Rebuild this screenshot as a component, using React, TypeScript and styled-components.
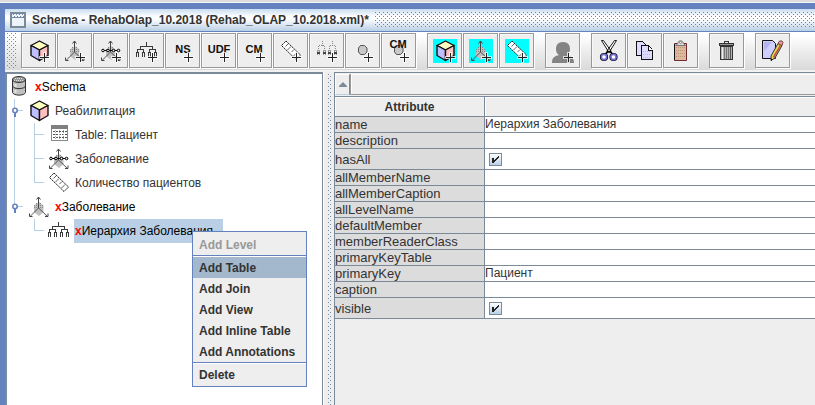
import React from "react";
import styled, { createGlobalStyle } from "styled-components";

const BLUE = "#6382bf";
const STEEL = "#7a8a99";
const PALE = "#b8cfe5";

const Global = createGlobalStyle`
  *, *::before, *::after { box-sizing: border-box; }
  body {
    margin: 0;
    background: #eeeeee;
    color: #333333;
    font: 12px/16px "Liberation Sans", Arial, sans-serif;
    overflow: hidden;
  }
  button, input { font: inherit; color: inherit; margin: 0; padding: 0; }
`;

const Desktop = styled.div`
  display: flex;
  flex-direction: column;
  height: 100vh;
  padding-top: 3px;
  background: linear-gradient(#dddddd 0 2px, #f4f4f4 2px 3px, #eeeeee 3px);
`;

const Frame = styled.section`
  flex: 1;
  min-height: 0;
  display: flex;
  flex-direction: column;
  border-top: 6px solid ${BLUE};
  border-left: 5px solid ${BLUE};
`;

const TitleBar = styled.header`
  display: flex;
  align-items: center;
  gap: 6px;
  height: 23px;
  padding-left: 5px;
  border-bottom: 1px solid ${BLUE};
  background: linear-gradient(#c8ddf2, #ffffff 35%, #ffffff 45%, ${PALE});
`;

const Title = styled.h1`
  margin: 0;
  font-size: 12px;
  line-height: 16px;
  font-weight: bold;
  white-space: nowrap;
`;

const DotFill = styled.svg`
  flex: 1;
  min-width: 0;
  height: 16px;
`;

const ToolBar = styled.div`
  display: flex;
  gap: 11px;
  height: 40px;
  padding: 1px 0 0 2px;
  background: linear-gradient(#ffffff 10%, #eeeeee 45%, #dadada 94%, #f2f2f2 95%);
`;

const Grip = styled.svg`
  width: 10px;
  height: 36px;
  margin-right: -7px;
  flex: none;
`;

const ToolGroup = styled.div`
  display: flex;
  gap: 1px;
`;

const ToolButton = styled.button`
  display: flex;
  flex: none;
  width: 35px;
  height: 35px;
  padding: 5px 4px 4px 5px;
  border: 1px solid #999999;
  border-radius: 0;
  background: #eeeeee;
  box-shadow: 1px 1px 0 #ffffff, inset 1px 1px 0 #f8f8f8;
`;

const Icon = styled.svg<{ $bg?: string }>`
  display: block;
  flex: none;
  width: 24px;
  height: 24px;
  background: ${(p) => p.$bg ?? "transparent"};
`;

const Body = styled.main`
  flex: 1;
  min-height: 0;
  display: grid;
  grid-template-columns: 318px 11px minmax(0, 1fr);
`;

const TreePane = styled.div`
  position: relative;
  border: solid ${STEEL};
  border-width: 2px 1px 0 2px;
  background: #ffffff;
  padding-top: 1px;
`;

const TreeList = styled.ul`
  margin: 0;
  padding: 0;
  list-style: none;
`;

const TreeRow = styled.li`
  display: flex;
  align-items: center;
  height: 24px;
`;

const Guide = styled.svg`
  flex: none;
  width: 20px;
  height: 24px;
`;

const NodeLabel = styled.span<{ $marked?: boolean; $selected?: boolean }>`
  display: flex;
  align-items: center;
  align-self: stretch;
  margin-left: 3px;
  padding: 0 10px 0 1px;
  white-space: nowrap;
  color: ${(p) => (p.$marked ? "#000000" : "#333333")};
  background: ${(p) => (p.$selected ? PALE : "transparent")};
`;

const Mark = styled.b`
  color: #ff0000;
`;

const Menu = styled.div`
  position: absolute;
  left: 185px;
  top: 157px;
  z-index: 2;
  display: flex;
  flex-direction: column;
  width: 115px;
  padding: 2px 0 1px;
  border: 1px solid ${BLUE};
  background: #eeeeee;
`;

const MenuItem = styled.button<{ $active?: boolean }>`
  height: 21px;
  padding: 0 6px;
  border: 0;
  text-align: left;
  font-weight: bold;
  line-height: 20px;
  white-space: nowrap;
  background: ${(p) => (p.$active ? "#a3b8cc" : "transparent")};
  &:disabled { color: #999999; }
`;

const MenuRule = styled.hr`
  width: 100%;
  height: 2px;
  margin: 0;
  border: 0;
  border-top: 1px solid ${BLUE};
  background: #ffffff;
`;

const Divider = styled.svg`
  width: 11px;
  height: 100%;
  border-left: 1px solid #ffffff;
  background: #eeeeee;
`;

const Properties = styled.div`
  min-width: 0;
  border-top: 1px solid ${STEEL};
  border-left: 1px solid ${STEEL};
`;

const CollapseBar = styled.div`
  display: flex;
  height: 24px;
  padding: 1px 0;
  border-bottom: 1px solid ${STEEL};
`;

const ArrowButton = styled.button`
  display: grid;
  place-items: center;
  width: 15px;
  border: 1px solid #ffffff;
  border-right-color: ${STEEL};
  border-bottom-color: ${PALE};
  background: #eeeeee;
`;

const Track = styled.div`
  flex: 1;
  border: solid #999999;
  border-width: 0 0 1px 1px;
  box-shadow: inset 1px 1px 0 #ffffff;
`;

const Grid = styled.table`
  width: 100%;
  table-layout: fixed;
  border-collapse: separate;
  border-spacing: 0;
  line-height: 15px;
  white-space: nowrap;
`;

const HeadCell = styled.th<{ $first?: boolean }>`
  height: 20px;
  padding: 2px 0 0;
  width: ${(p) => (p.$first ? "150px" : "auto")};
  border: solid ${STEEL};
  border-width: 0 ${(p) => (p.$first ? "1px" : "0")} 1px 0;
  box-shadow: inset 1px 1px 0 #ffffff;
`;

const NameCell = styled.th<{ $tall?: boolean }>`
  height: ${(p) => (p.$tall ? "21px" : "16px")};
  padding: 0;
  text-align: left;
  font-size: 13px;
  font-weight: normal;
  border: solid ${STEEL};
  border-width: 0 1px 1px 0;
  background: #dcdcdc;
`;

const ValueCell = styled.td`
  padding: 0;
  border-bottom: 1px solid ${STEEL};
  background: #ffffff;
`;

const ValueInput = styled.input`
  display: block;
  width: 100%;
  height: 15px;
  border: 0;
  outline: 0;
  background: transparent;
`;

const Check = styled.input`
  display: block;
  appearance: none;
  width: 13px;
  height: 13px;
  margin-left: 4px;
  border: 1px solid ${STEEL};
  background: linear-gradient(#ffffff, ${PALE});
  &:checked {
    background: url("data:image/svg+xml,%3Csvg xmlns='http://www.w3.org/2000/svg' viewBox='0 0 11 11'%3E%3Cpath d='M2 4h2v2h1v-1h1v-1h1v-1h1v-1h1v2h-1v1h-1v1h-1v1h-1v1h-1v1h-2z' fill='%23222'/%3E%3C/svg%3E"),
      linear-gradient(#ffffff, ${PALE});
  }
`;

const DotPattern = ({ id, color }: { id: string; color: string }) => (
  <>
    <defs>
      <pattern id={id} width="4" height="4" patternUnits="userSpaceOnUse">
        <path d="M0 0h1v1H0zM2 2h1v1H2z" fill={color} />
      </pattern>
    </defs>
    <rect width="100%" height="100%" fill={`url(#${id})`} />
  </>
);

const Plus = () => (
  <g shapeRendering="crispEdges">
    <path d="M16 13h3v4h4v3h-4v4h-3v-4h-4v-3h4z" fill="#fff" opacity=".7" />
    <path d="M17 14h1v4h4v1h-4v4h-1v-4h-4v-1h4z" fill="#222" />
  </g>
);

const Cube = () => (
  <g stroke="#111" strokeWidth="1.4" strokeLinejoin="round">
    <path d="M12.5 2 21 6.5 12.5 11 4 6.5z" fill="#ffffbf" />
    <path d="M4 6.5 12.5 11v10.5L4 16.5z" fill="#bfbfff" />
    <path d="M21 6.5 12.5 11v10.5l8.5-5z" fill="#ffbfbf" />
  </g>
);

const Axes = () => (
  <g fill="none" stroke="#444">
    <path d="M12 7 16.5 10.5V17L12 21l-5-4v-6.5z" fill="#c0c0c0" stroke="none" />
    <path d="M7 10.5h9M7 12.5h9M9 8.5h6" stroke="#888" strokeDasharray="1 1" />
    <path d="M11.5 2v11" shapeRendering="crispEdges" />
    <path d="m11.5 13-8 8M11.5 13l8.500 8" strokeWidth=".9" />
    <path d="M9.500 4.500 11.500 2l2 2.500M2.500 18.500v3H5.500M18 21.500h3v-3" />
  </g>
);

const Beads = () => (
  <g fill="#eee" stroke="#000">
    <path d="M3 11.5h18" shapeRendering="crispEdges" />
    {[4, 9, 14.5, 19.5].map((x) => (
      <circle key={x} cx={x} cy="11.5" r="1.3" />
    ))}
  </g>
);

const Hierarchy = () => (
  <g fill="none" stroke="#3a3a3a" shapeRendering="crispEdges">
    <path d="M11.5 3v4M5.5 10V7.5h12V10" />
    <path d="M2.5 14v-3.5h6V14M14.500 14v-3.500h6V14" />
    <path d="M1.500 18v-4.500h2V18M7.500 18v-4.500h2V18M13.500 18v-4.500h2V18M19.500 18v-4.500h2V18" />
  </g>
);

const Ruler = () => (
  <g stroke="#222">
    <path d="M7 2 21.5 16 17 20.5 2.5 6.5z" fill="#fff" strokeDasharray="2 .6" />
    <path d="m9 5-2.5 2.5M12 7.5 8.5 11M15 10.5 12.5 13M18 13.5 14.5 17" fill="none" stroke="#666" />
  </g>
);

const Twigs = () => (
  <g fill="none" stroke="#888" shapeRendering="crispEdges">
    <path d="M7.5 2v5M17.5 2v5" strokeDasharray="1 1" />
    <path d="M3.5 10V6.5h6V10M14.5 10V6.500h6V10" strokeDasharray="1 1" />
    <path d="M2.5 16v-5h2v5M8.5 16v-5h2v5M13.500 16v-5h2v5M19.500 16v-5h2v5" stroke="#999" />
    <path d="M2 13.500h3M8 13.500h3M13 13.500h3M19 13.500h3" stroke="#444" strokeWidth="2" />
  </g>
);

const Member = () => (
  <path d="M9.5 6.500h4l2.500 2.500v4l-2.500 2.500h-4L7.500 13V9z" fill="#c8c8c8" stroke="#555" />
);

const Letters = ({ x, y, children }: { x: number; y: number; children: string }) => (
  <text x={x} y={y} fontFamily='"Liberation Sans", Arial, sans-serif' fontSize="11" fontWeight="bold" textAnchor="middle" fill="#111">
    {children}
  </text>
);

const Person = () => (
  <path d="M12 3c5 0 7 3 7 7 0 3-1 5-3 6 4 1 7 2 7 8H1c0-6 3-7 7-8-2-1-3-3-3-6 0-4 2-7 7-7z" fill="#848484" />
);

const Scissors = () => (
  <g fill="#fff" stroke="#000">
    <path d="m4.5 1.5 7.5 12 2-1.5L6.500 1.500zM19.500 1.500l-7.500 12-2-1.500 7.500-10.500z" strokeWidth=".9" />
    <path d="m11 12-3 4M13 12l3 4" strokeWidth="1.8" />
    <circle cx="7" cy="18" r="2.6" strokeWidth="3" />
    <circle cx="16.5" cy="18" r="2.6" strokeWidth="3" />
    <circle cx="7" cy="18" r="2.6" stroke="#7070d8" strokeWidth="1.6" />
    <circle cx="16.5" cy="18" r="2.6" stroke="#7070d8" strokeWidth="1.6" />
  </g>
);

const Pages = () => (
  <g fill="#dcdcff" stroke="#111" shapeRendering="crispEdges">
    <path d="M3.5 2.5h6l3 3v11h-9z" />
    <path d="M8.5 6.5h7l4 5v9h-11z" />
    <path d="M15.5 6.5v5h4" fill="#fff" />
    <path d="M10 12.5h8M10 15.5h8M10 18.5h8" stroke="#b4b4e8" strokeDasharray="1 1" />
  </g>
);

const Clipboard = () => (
  <g>
    <path d="M5.5 4.5h12v17h-12z" fill="#dcb89c" stroke="#722a30" />
    <path d="M5.5 21V5" stroke="#111" />
    <path d="M7 8.5h10M7 11.5h10M7 14.5h10M7 17.5h10" stroke="#b99478" strokeDasharray="1 1" />
    <path d="M7 6.5 9 4c0-3 5-3 5 0l2.5 2.5z" fill="#ddd" stroke="#777" />
    <circle cx="11.5" cy="3.5" r="1" fill="#fff" stroke="#555" strokeWidth=".6" />
  </g>
);

const Bin = () => (
  <g stroke="#333" shapeRendering="crispEdges">
    <path d="M9.5 4V2.5h4V4" fill="none" />
    <path d="M4.5 4.5h14v2h-14z" fill="#999" />
    <path d="M5.5 7.5h12v13h-12z" fill="#b4b4b4" />
    <path d="M7.5 8v12" stroke="#eee" />
    <path d="M9.5 8v12M11.500 8v12M13.500 8v12" stroke="#777" />
    <path d="M15.5 8v12" stroke="#555" />
  </g>
);

const Note = () => (
  <g>
    <path d="M1.5 1.5h10l3 3v15h-13z" fill="#cfcfff" stroke="#111" />
    <path d="M3 3h8L3 12z" fill="#b4b4ee" />
    <path d="m17 4.5 4 2-7 12.5-4 2.500v-4.500z" fill="#e8d850" stroke="#333" />
    <path d="m19.5 6.5-7 12" stroke="#c05848" strokeWidth="1.7" />
    <path d="m17 4.5 1.500-2.500h2.500l1 1.500-1 3z" fill="#e0a0a0" stroke="#7a4040" />
    <path d="m10 19.5 1.500 1-1.500 1.500z" />
  </g>
);

const Cylinder = () => (
  <g stroke="#333">
    <path d="M5.5 4v13.5c1 3.500 12 3.500 13 0V4z" fill="#c0c0c0" />
    <ellipse cx="12" cy="4.5" rx="6.5" ry="3" fill="#999" />
    <path d="M5.5 11c1 3.500 12 3.500 13 0" fill="none" />
    <path d="M8.5 9v3M8.5 15v3" stroke="#e4e4e4" strokeWidth="2" />
    <path d="M8 3.5h8M7 5.5h10" stroke="#ddd" strokeDasharray="1 1" />
  </g>
);

const Sheet = () => (
  <g fill="none" stroke="#888" shapeRendering="crispEdges">
    <path d="M4.5 2.5h16v15h-16z" fill="#fff" />
    <path d="M4 2h17v4H4z" fill="#808080" stroke="none" />
    <path d="M6 8.5h14M6 11.5h14M6 14.5h14" stroke="#555" strokeDasharray="2 1" />
    <path d="M8.5 7v10M12.5 7v10M16.5 7v10" stroke="#aaa" strokeDasharray="1 1" />
  </g>
);

type Tool = { label: string; art: React.ReactNode; plus?: boolean; bg?: string };

const toolGroups: Tool[][] = [
  [
    { label: "Add Cube", art: <Cube />, plus: true },
    { label: "Add Dimension", art: <Axes />, plus: true },
    { label: "Add Dimension Usage", art: <><Axes /><Beads /></>, plus: true },
    { label: "Add Hierarchy", art: <Hierarchy />, plus: true },
    { label: "Add Named Set", art: <Letters x={12} y={14}>NS</Letters>, plus: true },
    { label: "Add User Defined Function", art: <Letters x={12} y={14}>UDF</Letters>, plus: true },
    { label: "Add Calculated Member", art: <Letters x={11} y={14}>CM</Letters>, plus: true },
    { label: "Add Measure", art: <Ruler />, plus: true },
    { label: "Add Level", art: <Twigs />, plus: true },
    { label: "Add Property", art: <Member />, plus: true },
    { label: "Add Calculated Member Property", art: <><Member /><Letters x={11} y={9}>CM</Letters></>, plus: true },
  ],
  [
    { label: "Add Virtual Cube", art: <Cube />, plus: true, bg: "#00ffff" },
    { label: "Add Virtual Cube Dimension", art: <Axes />, plus: true, bg: "#00ffff" },
    { label: "Add Virtual Cube Measure", art: <Ruler />, plus: true, bg: "#00ffff" },
  ],
  [{ label: "Add Role", art: <Person />, plus: true }],
  [
    { label: "Cut", art: <Scissors /> },
    { label: "Copy", art: <Pages /> },
    { label: "Paste", art: <Clipboard /> },
  ],
  [{ label: "Delete", art: <Bin /> }],
  [{ label: "Edit", art: <Note /> }],
];

type GuideKind = "line" | "handle" | "lastHandle" | "tee" | "elbow" | "none";

const guideLines: Record<GuideKind, string> = {
  line: "M7.5 0v24",
  handle: "M7.5 0v24M11 11.5h5",
  lastHandle: "M7.5 0v9M11 11.5h5",
  tee: "M7.5 0v24M8 11.5h9",
  elbow: "M7.5 0v11.5h9",
  none: "",
};

const TreeGuide = ({ kind }: { kind: GuideKind }) => {
  const handle = kind === "handle" || kind === "lastHandle";
  return (
    <Guide viewBox="0 0 20 24" aria-hidden="true">
      <path d={guideLines[kind]} fill="none" stroke={PALE} shapeRendering="crispEdges" />
      {handle && <path d="M8 13v5" stroke={BLUE} strokeWidth="2" />}
      {handle && <circle cx="8" cy="11.5" r="2.2" fill="#fff" stroke={BLUE} strokeWidth="1.6" />}
    </Guide>
  );
};

type TreeNode = {
  text: string;
  art: React.ReactNode;
  guides: GuideKind[];
  marked?: boolean;
  selected?: boolean;
};

const nodes: TreeNode[] = [
  { text: "Schema", art: <Cylinder />, guides: [], marked: true },
  { text: "Реабилитация", art: <Cube />, guides: ["handle"] },
  { text: "Table: Пациент", art: <Sheet />, guides: ["line", "tee"] },
  { text: "Заболевание", art: <><Axes /><Beads /></>, guides: ["line", "tee"] },
  { text: "Количество пациентов", art: <Ruler />, guides: ["line", "elbow"] },
  { text: "Заболевание", art: <Axes />, guides: ["lastHandle"], marked: true },
  { text: "Иерархия Заболевания", art: <Hierarchy />, guides: ["none", "elbow"], marked: true, selected: true },
];

const attributes: { name: string; value: string | boolean }[] = [
  { name: "name", value: "Иерархия Заболевания" },
  { name: "description", value: "" },
  { name: "hasAll", value: true },
  { name: "allMemberName", value: "" },
  { name: "allMemberCaption", value: "" },
  { name: "allLevelName", value: "" },
  { name: "defaultMember", value: "" },
  { name: "memberReaderClass", value: "" },
  { name: "primaryKeyTable", value: "" },
  { name: "primaryKey", value: "Пациент" },
  { name: "caption", value: "" },
  { name: "visible", value: true },
];

export default function App() {
  return (
    <>
      <Global />
      <Desktop>
        <Frame>
          <TitleBar>
            <svg width="16" height="16" viewBox="0 0 16 16" shapeRendering="crispEdges" aria-hidden="true">
              <path d="M1 1h14v14H1z" fill="#eef3f9" stroke={STEEL} strokeWidth="2" />
              <path d="M2 5.500h12" stroke={STEEL} />
              <path d="M3 2.500h11M4 4.500h10" stroke={BLUE} strokeDasharray="1 2" />
            </svg>
            <Title>Schema - RehabOlap_10.2018 (Rehab_OLAP_10.2018.xml)*</Title>
            <DotFill aria-hidden="true">
              <DotPattern id="title-dots" color={BLUE} />
            </DotFill>
          </TitleBar>
          <ToolBar role="toolbar" aria-label="Schema tools">
            <Grip aria-hidden="true">
              <DotPattern id="grip-dots" color={STEEL} />
            </Grip>
            {toolGroups.map((group, g) => (
              <ToolGroup key={g}>
                {group.map((tool) => (
                  <ToolButton key={tool.label} type="button" aria-label={tool.label}>
                    <Icon viewBox="0 0 24 24" $bg={tool.bg} aria-hidden="true">
                      {tool.art}
                      {tool.plus && <Plus />}
                    </Icon>
                  </ToolButton>
                ))}
              </ToolGroup>
            ))}
          </ToolBar>
          <Body>
            <TreePane>
              <TreeList role="tree" aria-label="Schema">
                {nodes.map((node, i) => (
                  <TreeRow key={i} role="treeitem" aria-level={node.guides.length + 1} aria-selected={!!node.selected}>
                    {node.guides.map((kind, k) => (
                      <TreeGuide key={k} kind={kind} />
                    ))}
                    <Icon viewBox="0 0 24 24" aria-hidden="true">{node.art}</Icon>
                    <NodeLabel $marked={node.marked} $selected={node.selected}>
                      {node.marked && <Mark>x</Mark>}
                      {node.text}
                    </NodeLabel>
                  </TreeRow>
                ))}
              </TreeList>
              <Menu role="menu" aria-label="Hierarchy actions">
                <MenuItem role="menuitem" type="button" disabled>Add Level</MenuItem>
                <MenuRule />
                <MenuItem role="menuitem" type="button" $active>Add Table</MenuItem>
                <MenuItem role="menuitem" type="button">Add Join</MenuItem>
                <MenuItem role="menuitem" type="button">Add View</MenuItem>
                <MenuItem role="menuitem" type="button">Add Inline Table</MenuItem>
                <MenuItem role="menuitem" type="button">Add Annotations</MenuItem>
                <MenuRule />
                <MenuItem role="menuitem" type="button">Delete</MenuItem>
              </Menu>
            </TreePane>
            <Divider aria-hidden="true">
              <svg x="4" y="2" width="4" height="100%">
                <DotPattern id="divider-dots" color={STEEL} />
              </svg>
            </Divider>
            <Properties>
              <CollapseBar>
                <ArrowButton type="button" aria-label="Scroll up">
                  <svg width="8" height="5" viewBox="0 0 8 5" aria-hidden="true">
                    <path d="M4 0l4 4v1H0V4z" fill={STEEL} />
                  </svg>
                </ArrowButton>
                <Track />
              </CollapseBar>
              <Grid>
                <thead>
                  <tr>
                    <HeadCell $first scope="col">Attribute</HeadCell>
                    <HeadCell aria-label="Value" scope="col" />
                  </tr>
                </thead>
                <tbody>
                  {attributes.map(({ name, value }) => (
                    <tr key={name}>
                      <NameCell scope="row" $tall={typeof value === "boolean"}>
                        <label htmlFor={name}>{name}</label>
                      </NameCell>
                      <ValueCell>
                        {typeof value === "boolean" ? (
                          <Check id={name} type="checkbox" defaultChecked={value} />
                        ) : (
                          <ValueInput id={name} type="text" defaultValue={value} />
                        )}
                      </ValueCell>
                    </tr>
                  ))}
                </tbody>
              </Grid>
            </Properties>
          </Body>
        </Frame>
      </Desktop>
    </>
  );
}
